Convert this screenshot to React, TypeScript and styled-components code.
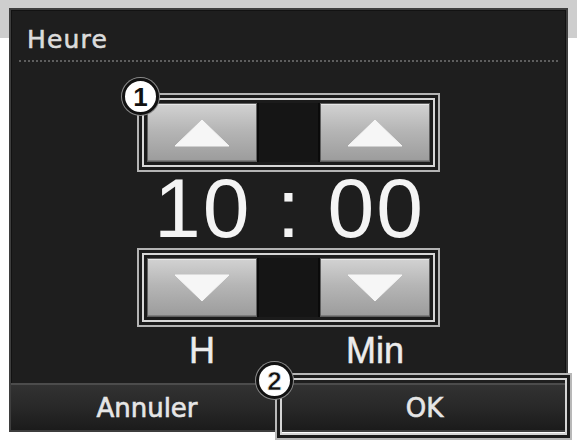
import styled, { createGlobalStyle } from 'styled-components';

const GlobalStyle = createGlobalStyle`
  html, body {
    margin: 0;
    padding: 0;
    background: #ffffff;
  }
  * {
    box-sizing: border-box;
  }
`;

const Page = styled.div`
  width: 577px;
  height: 445px;
  padding: 8px 9px 0 9px;
  background: linear-gradient(180deg, #cecece 0, #cecece 38px, #ffffff 38px);
  overflow: hidden;
`;

const Panel = styled.div`
  width: 559px;
  height: 424px;
  display: flex;
  flex-direction: column;
  background: #1e1e1e;
  border: 2px solid #3e3e3e;
  box-shadow: inset 0 0 0 1px #121212;
`;

const Header = styled.div`
  margin: 0 8px;
  padding: 15px 0 5px 8px;
  border-bottom: 2px dotted #5e5e5e;
`;

const Title = styled.div`
  font-family: 'DejaVu Sans', sans-serif;
  font-size: 25px;
  line-height: 30px;
  letter-spacing: 1.2px;
  color: #dcdcdc;
  -webkit-text-stroke: 0.6px #dcdcdc;
`;

const Body = styled.div`
  flex: 1;
  display: flex;
  flex-direction: column;
  align-items: center;
`;

const GroupFrame = styled.div<{ $top: number }>`
  position: relative;
  margin-top: ${(p) => p.$top}px;
  padding: 3px;
  border: 2px solid #b4b4b4;
  background: #1b1b1b;
`;

const GroupInner = styled.div`
  padding: 3px;
  border: 2px solid #d6d6d6;
`;

const ButtonRow = styled.div`
  display: grid;
  grid-template-columns: 110px 63px 110px;
  height: 59px;
  background: #121212;
`;

const ArrowButton = styled.button`
  display: flex;
  align-items: center;
  justify-content: center;
  padding: 0;
  border: 1px solid #5e5e5e;
  background: linear-gradient(180deg, #d2d2d2 0%, #b6b6b6 45%, #9c9c9c 100%);
  box-shadow: inset 0 1px 0 #e6e6e6, inset 0 -1px 0 #7c7c7c;
  cursor: pointer;
`;

const MiddleSlot = styled.div`
  background: #151515;
  border-left: 2px solid #0a0a0a;
  border-right: 2px solid #0a0a0a;
`;

const Badge = styled.div<{ $left: number; $top: number }>`
  position: absolute;
  left: ${(p) => p.$left}px;
  top: ${(p) => p.$top}px;
  width: 37px;
  height: 37px;
  display: flex;
  align-items: center;
  justify-content: center;
  border-radius: 50%;
  background: #ffffff;
  border: 3px solid #111111;
  box-shadow: 0 0 0 1px #8a8a8a;
  font-family: 'Liberation Sans', Arial, sans-serif;
  font-weight: 700;
  font-size: 26px;
  line-height: 1;
  color: #111111;
  z-index: 2;
`;

const TimeText = styled.div`
  margin-top: 5px;
  font-family: 'Liberation Sans', Arial, sans-serif;
  font-size: 84px;
  line-height: 62px;
  letter-spacing: 2px;
  padding-left: 2px;
  color: #f4f4f4;
  white-space: pre;
`;

const LabelRow = styled.div`
  margin-top: 10px;
  display: grid;
  grid-template-columns: 110px 63px 110px;
  margin-left: 10px;
  margin-right: 10px;
`;

const UnitLabel = styled.div<{ $col: number }>`
  grid-column: ${(p) => p.$col};
  text-align: center;
  font-family: 'Liberation Sans', Arial, sans-serif;
  font-size: 36px;
  line-height: 28px;
  color: #ececec;
  -webkit-text-stroke: 0.5px #ececec;
`;

const BottomBar = styled.div`
  display: grid;
  grid-template-columns: 272px 1fr;
  height: 47px;
`;

const BarButton = styled.button`
  position: relative;
  padding: 0;
  border: none;
  border-top: 2px solid #4c4c4c;
  background: linear-gradient(180deg, #323232 0%, #282828 50%, #1b1b1b 100%);
  font-family: 'DejaVu Sans', sans-serif;
  font-size: 26px;
  color: #e6e6e6;
  -webkit-text-stroke: 0.6px #e6e6e6;
  cursor: pointer;
`;

const AnnotFrame = styled.div`
  position: absolute;
  left: -8px;
  top: -12px;
  right: -6px;
  bottom: -10px;
  border: 2px solid #b8b8b8;
  box-shadow: inset 0 0 0 3px #1c1c1c, inset 0 0 0 5px #d4d4d4;
  pointer-events: none;
`;

const Arrow = ({ dir }: { dir: 'up' | 'down' }) => (
  <svg width="56" height="28" viewBox="0 0 56 28">
    <polygon
      points={dir === 'up' ? '28,1 55,27 1,27' : '1,1 55,1 28,27'}
      fill="#f6f6f6"
      stroke="#f6f6f6"
      strokeWidth="1"
      strokeLinejoin="round"
    />
  </svg>
);

const Stepper = ({ dir, top, badge }: { dir: 'up' | 'down'; top: number; badge?: string }) => (
  <GroupFrame $top={top}>
    {badge && (
      <Badge $left={-17} $top={-17}>
        {badge}
      </Badge>
    )}
    <GroupInner>
      <ButtonRow>
        <ArrowButton aria-label={dir === 'up' ? 'Heure +' : 'Heure -'}>
          <Arrow dir={dir} />
        </ArrowButton>
        <MiddleSlot />
        <ArrowButton aria-label={dir === 'up' ? 'Minute +' : 'Minute -'}>
          <Arrow dir={dir} />
        </ArrowButton>
      </ButtonRow>
    </GroupInner>
  </GroupFrame>
);

const App = () => {
  return (
    <>
      <GlobalStyle />
      <Page>
        <Panel>
          <Header>
            <Title>Heure</Title>
          </Header>
          <Body>
            <Stepper dir="up" top={31} badge="1" />
            <TimeText>10 : 00</TimeText>
            <Stepper dir="down" top={9} />
            <LabelRow>
              <UnitLabel $col={1}>H</UnitLabel>
              <UnitLabel $col={3}>Min</UnitLabel>
            </LabelRow>
          </Body>
          <BottomBar>
            <BarButton>Annuler</BarButton>
            <BarButton>
              OK
              <AnnotFrame />
              <Badge $left={-27} $top={-23}>
                2
              </Badge>
            </BarButton>
          </BottomBar>
        </Panel>
      </Page>
    </>
  );
};

export default App;
